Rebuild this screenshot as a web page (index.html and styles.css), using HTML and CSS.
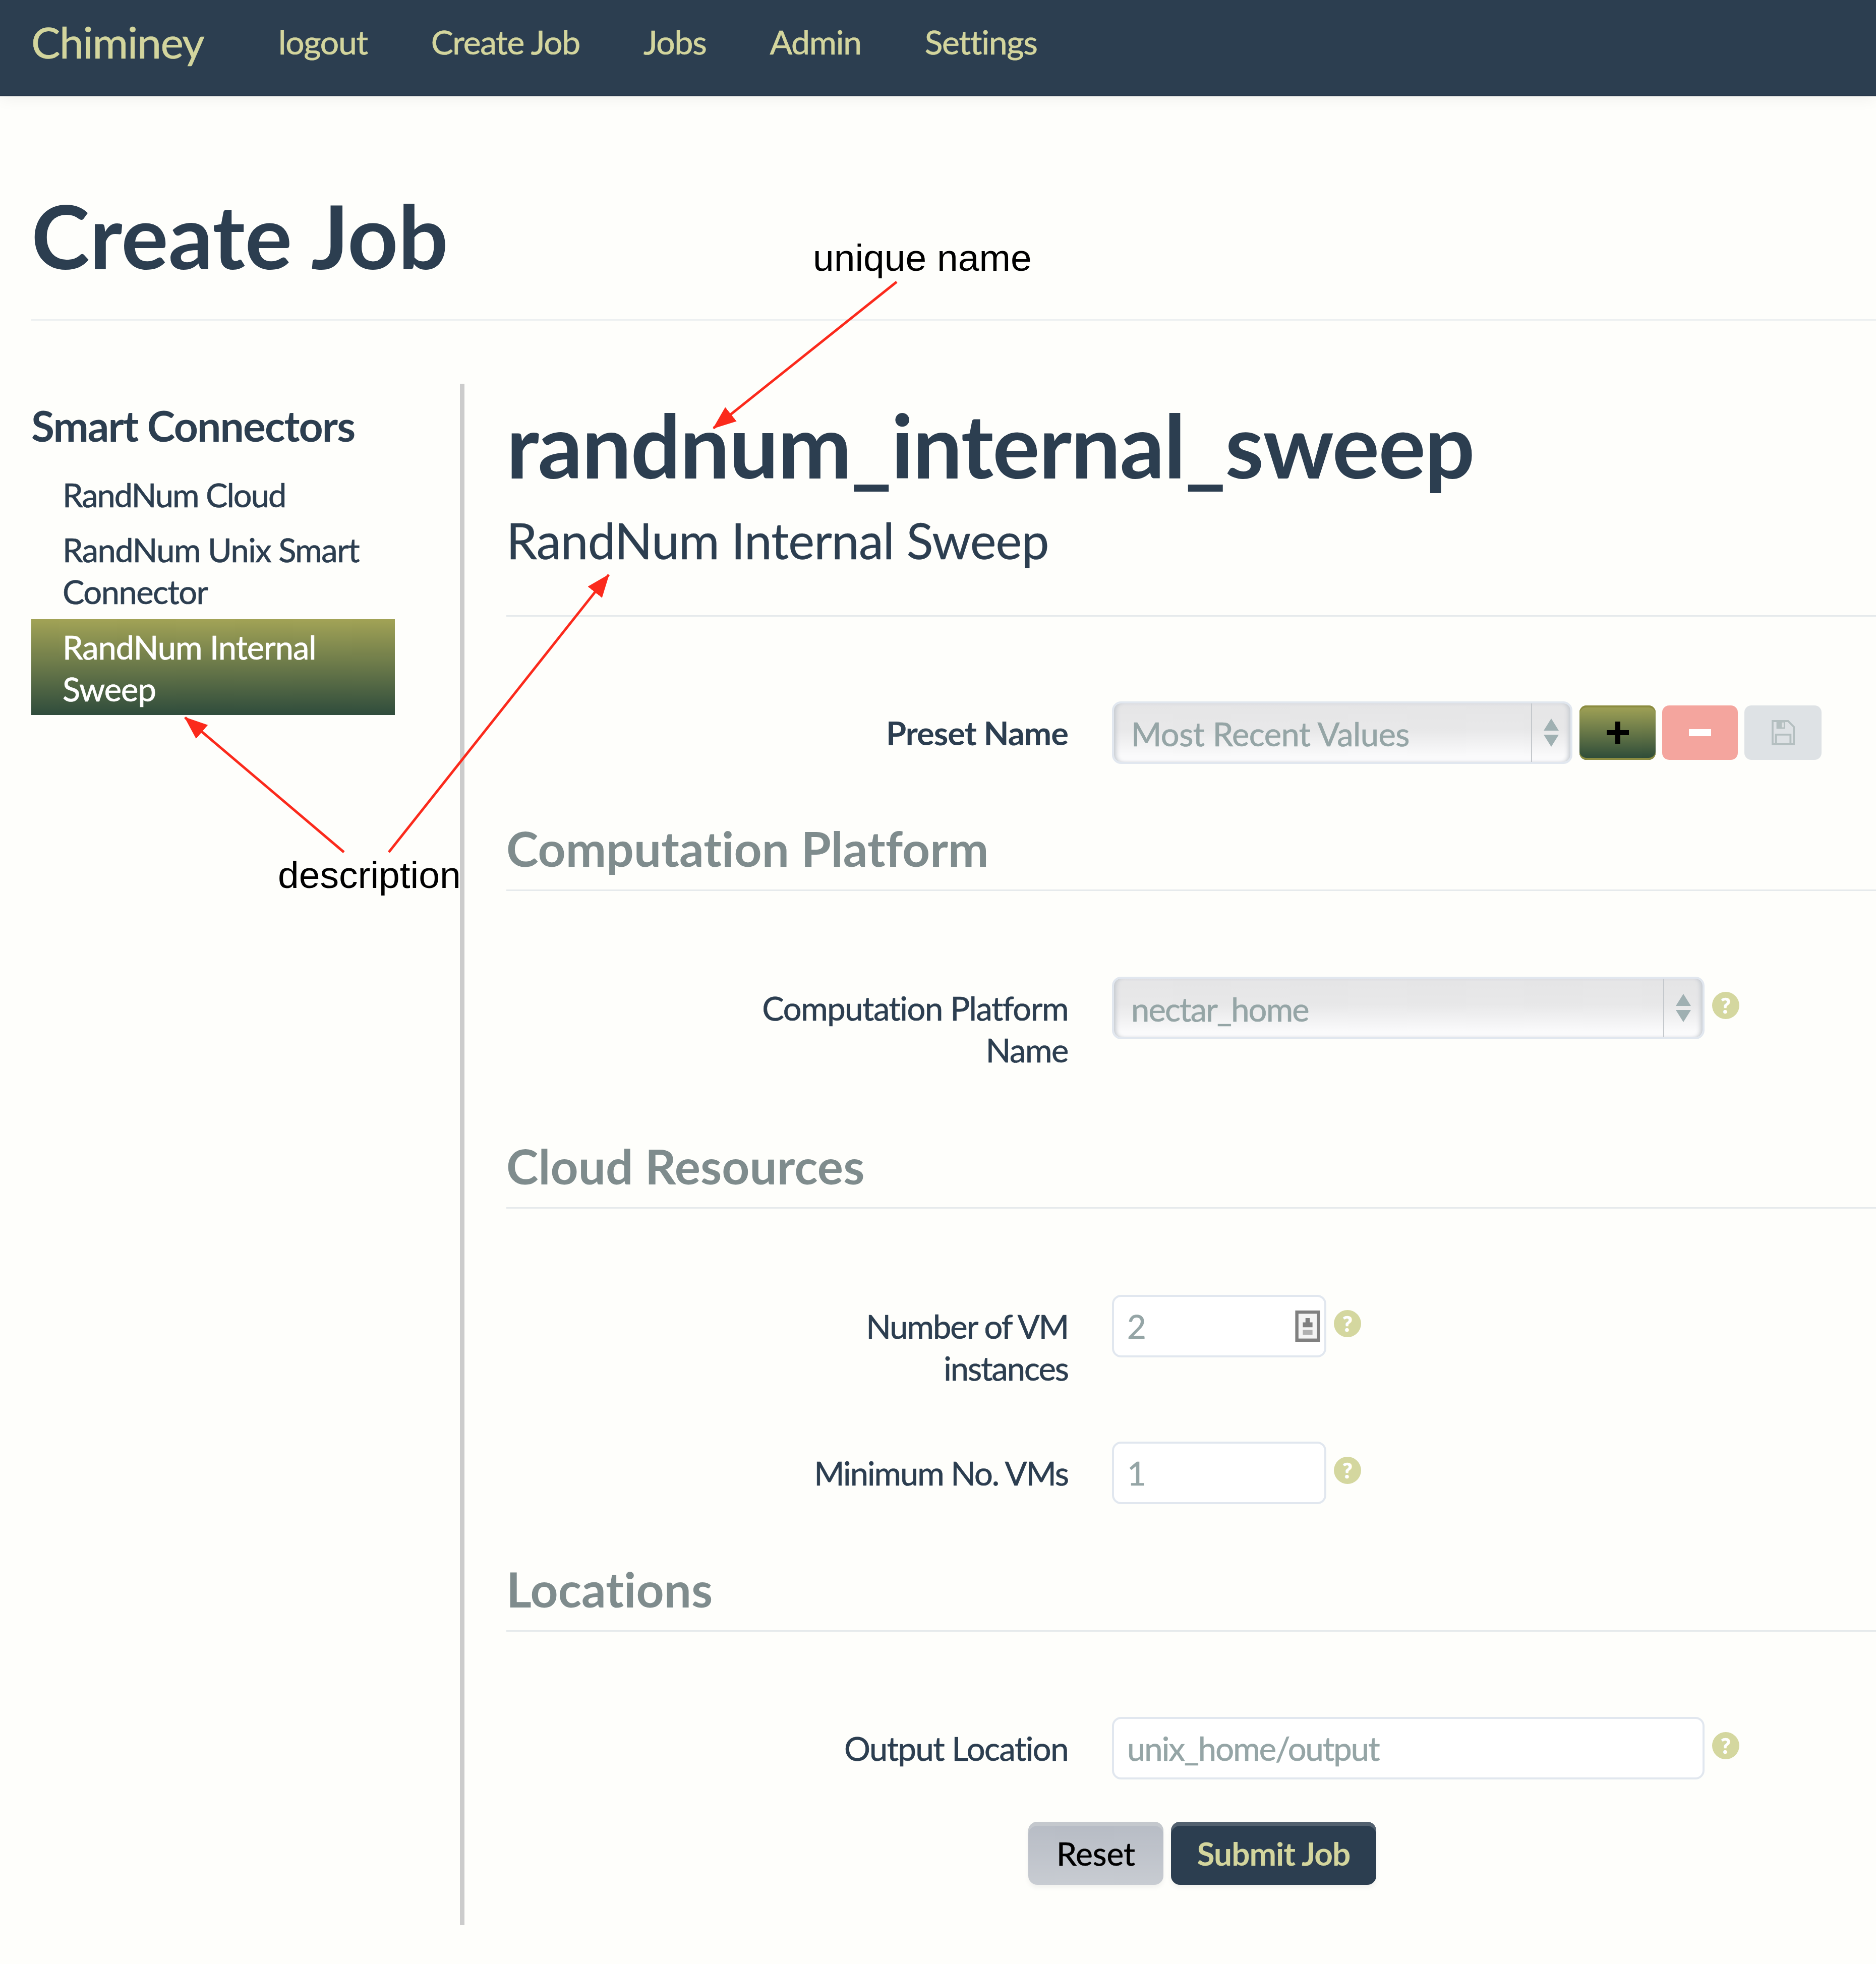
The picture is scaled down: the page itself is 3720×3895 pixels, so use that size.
FILE: index.html
```html
<!DOCTYPE html>
<html lang="en">
<head>
<meta charset="utf-8">
<title>Chiminey - Create Job</title>
<link rel="stylesheet" href="styles.css">
</head>
<body>
<header class="navbar">
  <a class="brand">Chiminey</a>
  <nav class="nav-links">
    <a>logout</a>
    <a>Create Job</a>
    <a>Jobs</a>
    <a>Admin</a>
    <a>Settings</a>
  </nav>
</header>
<div class="page">
  <div class="page-header"><h1 class="page-title">Create Job</h1></div>
  <div class="columns">
    <aside class="sidebar">
      <h3 class="side-title">Smart Connectors</h3>
      <ul class="side-list">
        <li class="side-item side-first">RandNum Cloud</li>
        <li class="side-item side-second">RandNum Unix Smart Connector</li>
        <li class="side-item side-active">RandNum Internal Sweep</li>
      </ul>
    </aside>
    <main class="content">
      <h1 class="sc-name">randnum_internal_sweep</h1>
      <h2 class="sc-desc">RandNum Internal Sweep</h2>
      <div class="row row-preset">
        <label class="label label-bold">Preset Name</label>
        <div class="select select-preset"><span class="select-text">Most Recent Values</span><span class="updown"><i class="up"></i><i class="down"></i></span></div>
        <button class="icon-btn btn-add"><svg viewBox="0 0 44 44" class="ico"><path d="M17 0h10v17h17v10H27v17H17V27H0V17h17z" fill="#000"/></svg></button>
        <button class="icon-btn btn-del"><svg viewBox="0 0 44 14" class="ico-minus"><rect width="44" height="14" fill="#fff"/></svg></button>
        <button class="icon-btn btn-save"><svg viewBox="0 0 48 52" class="ico-save"><path d="M2 2h32l12 12v36H2z" fill="none" stroke="#b4bfc0" stroke-width="4"/><path d="M10 2h18v16H10z" fill="#b4bfc0"/><path d="M21 5h4v10h-4z" fill="#dde1e3"/><path d="M9 30h30v20H9z" fill="none" stroke="#b4bfc0" stroke-width="4"/></svg></button>
      </div>
      <h3 class="section">Computation Platform</h3>
      <div class="row row-comp">
        <label class="label label-comp">Computation Platform Name</label>
        <div class="select select-wide"><span class="select-text">nectar_home</span><span class="updown"><i class="up"></i><i class="down"></i></span></div>
        <span class="help">?</span>
      </div>
      <h3 class="section section-cloud">Cloud Resources</h3>
      <div class="row row-vm">
        <label class="label">Number of VM instances</label>
        <div class="input input-small"><span class="input-text">2</span><svg class="contact" viewBox="0 0 46 58"><rect x="3" y="3" width="40" height="52" fill="#f4f4f4" stroke="#808080" stroke-width="6"/><path d="M19 14h8v8h5v9H14v-9h5z" fill="#808080"/><rect x="14" y="36" width="18" height="9" fill="#b0b0b0"/></svg></div>
        <span class="help">?</span>
      </div>
      <div class="row row-min">
        <label class="label">Minimum No. VMs</label>
        <div class="input input-small"><span class="input-text">1</span></div>
        <span class="help">?</span>
      </div>
      <h3 class="section section-loc">Locations</h3>
      <div class="row row-out">
        <label class="label label-out">Output Location</label>
        <div class="input input-wide"><span class="input-text">unix_home/output</span></div>
        <span class="help">?</span>
      </div>
      <div class="actions">
        <button class="btn btn-reset">Reset</button>
        <button class="btn btn-submit">Submit Job</button>
      </div>
    </main>
  </div>
</div>
<svg class="arrows" viewBox="0 0 3720 3895" width="3720" height="3895">
  <defs>
    <marker id="head" markerUnits="userSpaceOnUse" markerWidth="46" markerHeight="36" refX="44" refY="18" orient="auto">
      <path d="M0 0L46 18L0 36z" fill="#fb2a1c"/>
    </marker>
  </defs>
  <line x1="1778" y1="559" x2="1415" y2="849" class="arrow" marker-end="url(#head)"/>
  <line x1="682" y1="1690" x2="367" y2="1423" class="arrow" marker-end="url(#head)"/>
  <line x1="771" y1="1690" x2="1207" y2="1140" class="arrow" marker-end="url(#head)"/>
</svg>
<div class="note note-unique">unique name</div>
<div class="note note-desc">description</div>
</body>
</html>
```
FILE: styles.css
```css
* { box-sizing: border-box; }
html, body { margin: 0; padding: 0; }
body {
  position: relative;
  width: 3720px;
  height: 3895px;
  overflow: hidden;
  background: #fefefb;
  color: #2c3e50;
  font-family: Lato, "Open Sans", sans-serif;
  font-size: 65px;
  line-height: 83px;
  letter-spacing: -2px;
  -webkit-text-stroke: 0.7px;
}
.navbar {
  height: 191px;
  background: #2c3e50;
  display: flex;
  align-items: flex-start;
  padding-left: 62px;
  color: #d3d59d;
  box-shadow: 0 4px 30px rgba(0, 0, 0, 0.06);
  border-bottom: 3px solid #27374a;
}
.brand { font-size: 86px; line-height: 165px; letter-spacing: -1.5px; }
.nav-links { display: flex; gap: 126px; margin-left: 148px; font-size: 66px; line-height: 165px; letter-spacing: -1.3px; }
.page { padding-left: 62px; }
.page-header { height: 445px; border-bottom: 3px solid #edf0f1; display: flex; align-items: flex-start; }
.page-title { margin: 175px 0 0; font-size: 175px; line-height: 200px; font-weight: 700; letter-spacing: 0; -webkit-text-stroke: 0; }
.columns { display: flex; margin-top: 125px; }
.sidebar {
  width: 859px;
  height: 3057px;
  border-right: 9px solid #cccccc;
  flex: none;
}
.side-title { margin: 33px 0 0; font-size: 84px; line-height: 100px; font-weight: 700; letter-spacing: -1.9px; -webkit-text-stroke: 0; }
.side-list { list-style: none; margin: 46px 0 0; padding: 0; width: 721px; }
.side-item { padding: 0 62px; margin-bottom: 26px; letter-spacing: -1.5px; }
.side-first { letter-spacing: -2px; }
.side-second { margin-bottom: 13px; }
.side-active {
  margin: 0;
  padding: 14px 62px 0;
  height: 190px;
  color: #fff;
  letter-spacing: -1px;
  background: linear-gradient(#a2a356, #2f4c3c);
}
.content { flex: 1; min-width: 0; padding-left: 83px; }
.sc-name { margin: 25px 0 0; font-size: 175px; line-height: 190px; font-weight: 700; letter-spacing: -1.7px; -webkit-text-stroke: 0; }
.sc-desc {
  margin: 30px 0 0;
  height: 217px;
  font-size: 98px;
  line-height: 130px;
  font-weight: 400;
  letter-spacing: -0.8px;
  -webkit-text-stroke: 0.4px;
  border-bottom: 3px solid #e6eaec;
}
.row { display: flex; align-items: flex-start; }
.row-preset { margin-top: 168px; }
.row-comp { margin-top: 170px; }
.row-vm { margin-top: 171px; }
.row-min { margin-top: 104px; }
.row-out { margin-top: 169px; }
.label { width: 1114px; padding-left: 464px; flex: none; text-align: right; padding-top: 21px; color: #2c3e50; }
.label-bold { font-weight: 700; letter-spacing: -1px; -webkit-text-stroke: 0; padding-left: 0; }
.label-comp { letter-spacing: -1.4px; }
.label-out { letter-spacing: -1.5px; }
.select, .input {
  margin-left: 87px;
  flex: none;
  height: 124px;
  border: 4px solid #e1e7ef;
  border-radius: 18px;
  color: #95a5a6;
  display: flex;
  align-items: center;
  position: relative;
}
.select {
  background: linear-gradient(#e5e5e6 0%, #e8e8e9 45%, #fafafb 90%);
  box-shadow: inset 8px 0 8px -4px #c5cad0, inset -8px 0 8px -4px #c5cad0;
  padding-left: 34px;
}
.select-preset { width: 913px; letter-spacing: -0.5px; }
.select-wide { width: 1175px; letter-spacing: -1.8px; }
.select-text { flex: 1; padding-top: 4px; }
.updown {
  width: 78px;
  height: 100%;
  border-left: 2px solid #c4c8cc;
  display: flex;
  flex-direction: column;
  align-items: center;
  justify-content: center;
  gap: 8px;
}
.up, .down { width: 0; height: 0; border-left: 15px solid transparent; border-right: 15px solid transparent; }
.up { border-bottom: 24px solid #9fb0b2; }
.down { border-top: 24px solid #9fb0b2; }
.icon-btn {
  margin: 8px 0 0 13px;
  padding: 0;
  width: 151px;
  height: 108px;
  border: none;
  border-radius: 14px;
  display: flex;
  align-items: center;
  justify-content: center;
  flex: none;
}
.select-preset + .btn-add { margin-left: 14px; }
.btn-add { background: linear-gradient(#a2a356, #2b4a38); box-shadow: inset 0 4px 0 #8b8c40, inset 0 -4px 0 #8b8c40; }
.btn-del { background: #f4a59e; width: 150px; }
.btn-save { background: #dee2e5; width: 153px; }
.ico { width: 44px; height: 44px; }
.ico-minus { width: 44px; height: 14px; }
.ico-save { width: 46px; height: 50px; }
.section {
  margin: 0;
  font-size: 96px;
  line-height: 120px;
  color: #7f8c8d;
  font-weight: 700;
  letter-spacing: 0.1px;
  -webkit-text-stroke: 0;
  border-bottom: 3px solid #e6eaec;
  height: 145px;
}
.row-preset + .section { margin-top: 107px; }
.section-cloud { margin-top: 128px; }
.section-loc { margin-top: 108px; }
.help {
  margin: 30px 0 0 15px;
  width: 54px;
  height: 54px;
  border-radius: 50%;
  background: #d4d79f;
  color: #fff;
  font-size: 42px;
  line-height: 54px;
  font-weight: 900;
  letter-spacing: 0;
  text-align: center;
  flex: none;
}
.input { background: #fff; padding-left: 26px; letter-spacing: -0.7px; }
.input-small { width: 425px; }
.input-wide { width: 1175px; letter-spacing: -1.9px; }
.input-text { flex: 1; padding-top: 0; }
.contact { width: 50px; height: 62px; margin-right: 8px; flex: none; }
.actions { display: flex; gap: 15px; margin: 84px 0 0 1035px; }
.btn {
  height: 125px;
  border: none;
  border-radius: 18px;
  padding: 0;
  font-family: Lato, sans-serif;
  font-size: 64px;
}
.btn-reset { width: 268px; color: #000; background: linear-gradient(#b6bbc4, #c8ccd2); box-shadow: inset 0 8px 0 #c4c8cd, 0 6px 10px rgba(0,0,0,0.05); letter-spacing: 0; }
.btn-submit { width: 407px; color: #d3d59d; background: #2c3e50; font-weight: 700; letter-spacing: -1px; -webkit-text-stroke: 0; box-shadow: inset 0 8px 0 #53616f, 0 6px 10px rgba(0,0,0,0.05); }
.arrows { position: absolute; left: 0; top: 0; pointer-events: none; }
.arrow { stroke: #fb2a1c; stroke-width: 5; }
.note { position: absolute; font-family: "Liberation Sans", Arial, sans-serif; font-size: 75px; line-height: 86px; letter-spacing: 0; -webkit-text-stroke: 0; color: #000; white-space: nowrap; }
.note-unique { left: 1612px; top: 468px; }
.note-desc { left: 551px; top: 1692px; }
```
